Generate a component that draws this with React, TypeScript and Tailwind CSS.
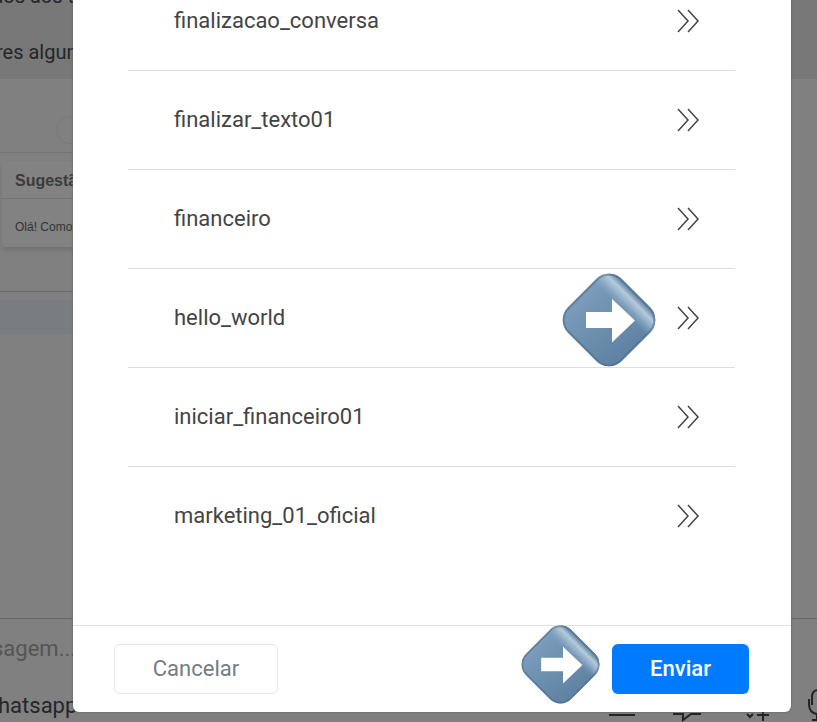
import React from "react";

const templates = [
  "finalizacao_conversa",
  "finalizar_texto01",
  "financeiro",
  "hello_world",
  "iniciar_financeiro01",
  "marketing_01_oficial",
];

function DoubleChevron() {
  return (
    <svg width="24" height="26" viewBox="0 0 24 26" fill="none" stroke="#444" strokeWidth="1.5" aria-hidden="true">
      <path d="M2 2 12 13 2 24M12 2l10 11-10 11" />
    </svg>
  );
}

function ArrowMarker({ className, id }: { className: string; id: string }) {
  return (
    <svg className={className} viewBox="0 0 94 94" aria-hidden="true">
      <defs>
        <linearGradient id={id + "-fill"} x1="0" y1="0" x2="1" y2="0">
          <stop offset="0" stopColor="#7b9cba" />
          <stop offset="0.5" stopColor="#6b8eae" />
          <stop offset="1" stopColor="#5d80a1" />
        </linearGradient>
        <linearGradient id={id + "-shine"} x1="0" y1="0" x2="0" y2="1">
          <stop offset="0" stopColor="#5d7f9f" />
          <stop offset="0.04" stopColor="#7896b2" />
          <stop offset="0.1" stopColor="#b4cbdd" />
          <stop offset="0.18" stopColor="#a3bdd3" stopOpacity="0.7" />
          <stop offset="0.3" stopColor="#7f9fbc" stopOpacity="0.1" />
          <stop offset="1" stopColor="#7f9fbc" stopOpacity="0" />
        </linearGradient>
      </defs>
      <g transform="rotate(45 47 47)">
        <rect x="9" y="9" width="76" height="76" rx="18" fill={"url(#" + id + "-fill)"} />
        <rect x="9" y="9" width="76" height="76" rx="18" fill={"url(#" + id + "-shine)"} />
        <rect x="10" y="10" width="74" height="74" rx="17" fill="none" stroke="#4f7090" strokeOpacity="0.6" strokeWidth="2" />
      </g>
      <path d="M24 39h26V26l23 21.500-23 22V55H24Z" fill="#fff" />
    </svg>
  );
}

function ConversationBackdrop() {
  return (
    <div className="flex min-h-screen flex-col bg-[#808080] text-[#242628]">
      <div className="h-[79px] shrink-0 bg-[#787878] text-xl leading-6 whitespace-nowrap">
        <p className="-mt-4 -ml-2">dos aos t</p>
        <p className="mt-8 -ml-1">res algum</p>
      </div>
      <div className="w-1/2">
        <div className="flex h-[74px] items-end border-b border-[#757575] pb-2 pl-14">
          <span className="h-7 w-24 rounded-full border border-[#797979]" />
        </div>
        <section className="mt-2 ml-[2px] w-60 rounded bg-[#828282] font-['Liberation_Sans',sans-serif] shadow-md">
          <h2 className="border-b border-[#737373] px-[13px] pt-[10px] pb-[7px] text-base leading-5 font-bold text-[#3b3b3b]">Sugestão</h2>
          <p className="px-[13px] pt-5 pb-3 text-xs leading-4 text-[#333]">Olá! Como</p>
        </section>
        <div className="mt-11 border-t border-[#6c6c6c] pt-2">
          <div className="h-[34px] bg-[#7a7d80]" />
        </div>
      </div>
      <footer className="mt-auto flex h-[104px] shrink-0 flex-col justify-between border-t border-[#696969] pt-4 text-[22px] leading-7">
        <span className="-ml-2 text-[#555]">sagem...</span>
        <div className="flex h-8 items-center justify-between">
          <span className="-ml-[2px]">hatsapp</span>
          <svg width="209" height="42" viewBox="0 0 209 42" fill="none" stroke="#242424" strokeWidth="2" aria-hidden="true">
            <path d="M1 30h26M65 29h10v6l8-6h10M139 29l3 3 3-3M149 30h12M155 24v12" />
            <path d="M201 14v5q0 9 8 10M209 29v6M204 35h5M204 20v-8q0-6 5-7" />
          </svg>
        </div>
      </footer>
    </div>
  );
}

export default function App() {
  return (
    <main className="relative h-screen overflow-hidden font-[Roboto,sans-serif]">
      <ConversationBackdrop />
      <div role="dialog" aria-label="Templates" className="absolute top-0 right-[26px] bottom-[10px] left-[73px] flex flex-col rounded-b-md bg-white shadow-[0_0_2px_#555]">
        <ul className="-mt-7 flex-1 pr-14 pl-[55px] text-[22px] leading-7 text-[#444]">
          {templates.map((name) => (
            <li key={name} className="flex h-[99px] items-center justify-between border-b border-[#dedede] pr-[35px] pl-[46px] last:border-transparent">
              <span>{name}</span>
              <div className="flex items-center gap-5">
                {name === "hello_world" && <ArrowMarker id="row" className="mt-1 size-[94px]" />}
                <button type="button" aria-label={"Selecionar " + name}>
                  <DoubleChevron />
                </button>
              </div>
            </li>
          ))}
        </ul>
        <div className="flex h-[87px] shrink-0 items-center justify-between border-t border-[#dee2e6] pr-[42px] pl-[41px] text-[22px] leading-7">
          <button type="button" className="h-[50px] w-[164px] rounded-md border border-[#e2e7e9] text-[#747c83]">Cancelar</button>
          <div className="flex items-center gap-3">
            <ArrowMarker id="footer" className="mb-[10px] size-[79px]" />
            <button type="button" className="h-[50px] w-[137px] rounded-md bg-[#007bff] font-medium text-white">Enviar</button>
          </div>
        </div>
      </div>
    </main>
  );
}
